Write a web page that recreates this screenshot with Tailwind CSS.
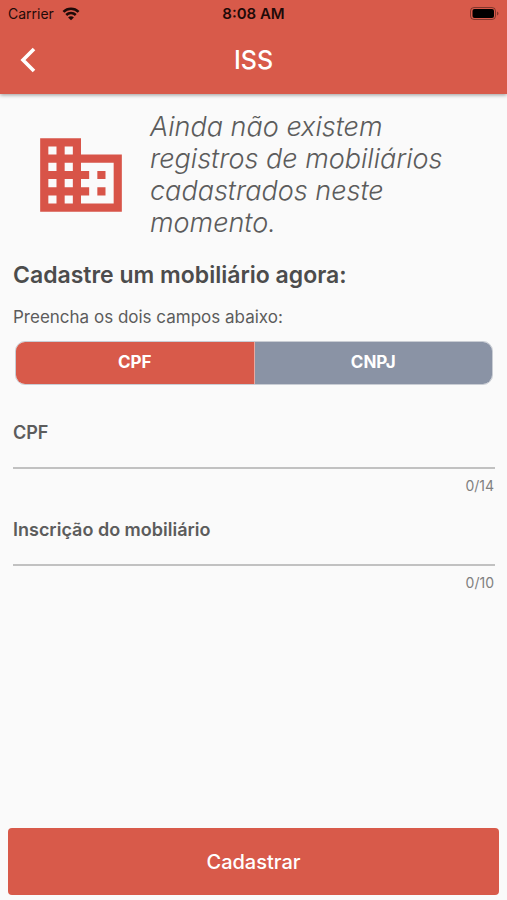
<!DOCTYPE html>
<html lang="pt-BR">
<head>
  <meta charset="UTF-8">
  <title>ISS</title>
  <meta name="viewport" content="width=device-width, initial-scale=1.0">
  <script src="https://cdn.jsdelivr.net/npm/@tailwindcss/browser@4"></script>
</head>
<body class="min-h-screen flex flex-col bg-[#fafafa] font-['Inter','Liberation_Sans',sans-serif] text-[#5c5c5c]">

  <header class="bg-[#d85a4a] shadow-[0_1px_4px_rgba(0,0,0,0.4)]">
    <!-- Status bar -->
    <div class="grid grid-cols-3 items-center h-7 px-2 text-sm leading-5 text-[#1f0a08]">
      <div class="flex items-center gap-2">
        <span>Carrier</span>
        <svg class="w-[18px] h-4" viewBox="0 0 20 17" fill="none" stroke="currentColor" stroke-width="2.8">
          <path d="M1.6 6.2a12 12 0 0 1 16.8 0"/>
          <path d="M4.7 9.6a7.6 7.6 0 0 1 10.6 0"/>
          <path d="M10 15.5l-3.2-3.2a4.5 4.5 0 0 1 6.4 0z" fill="currentColor" stroke="none"/>
        </svg>
      </div>
      <span class="text-center text-[15px] font-semibold">8:08 AM</span>
      <svg class="w-8 h-4 justify-self-end" viewBox="0 0 32 16">
        <rect x="3.5" y="1.5" width="25" height="12" rx="3.5" fill="none" stroke="#000" stroke-opacity=".4"/>
        <rect x="5.5" y="3" width="21.5" height="9" rx="2" fill="#000"/>
        <path d="M30 5.5c2 .8 2 3.2 0 4z" fill="#000" fill-opacity=".4"/>
      </svg>
    </div>

    <!-- Title bar -->
    <div class="grid grid-cols-3 items-center h-[66px] px-4 text-white">
      <button type="button" aria-label="Voltar" class="w-6 h-8">
        <svg class="w-6 h-8" viewBox="0 0 24 32" fill="none" stroke="currentColor" stroke-width="3.6">
          <path d="M18 4L7 15l11 11"/>
        </svg>
      </button>
      <h1 class="text-center text-[25px] font-medium">ISS</h1>
    </div>
  </header>

  <main class="flex-1 pl-[13px] pr-3 pt-[17px]">
    <div class="flex items-center gap-5 pl-[19px] pr-8">
      <svg class="w-[98px] h-[98px] shrink-0" viewBox="0 0 24 24" fill="#d85448">
        <path d="M12 7V3H2v18h20V7H12zM6 19H4v-2h2v2zm0-4H4v-2h2v2zm0-4H4V9h2v2zm0-4H4V5h2v2zm4 12H8v-2h2v2zm0-4H8v-2h2v2zm0-4H8V9h2v2zm0-4H8V5h2v2zm10 12h-8v-2h2v-2h-2v-2h2v-2h-2V9h8v10zm-2-8h-2v2h2v-2zm0 4h-2v2h2v-2z"/>
      </svg>
      <p class="flex-1 text-[27px] leading-8 italic font-light">Ainda não existem registros de mobiliários cadastrados neste momento.</p>
    </div>

    <form id="cadastro">
      <h2 class="mt-5 text-[23px] leading-8 font-semibold text-[#4c4c4c]">Cadastre um mobiliário agora:</h2>
      <p class="mt-[14px] text-[17px] leading-6">Preencha os dois campos abaixo:</p>

      <!-- CPF / CNPJ -->
      <div class="mt-3 mx-[2px] flex h-11 rounded-[10px] overflow-hidden border border-[#c9cdd4] text-[17px] font-bold text-white">
        <label class="flex-1 flex items-center justify-center bg-[#8a93a5] has-checked:bg-[#d85a4a] border-r border-[#e9a89f]">
          <input type="radio" name="tipo" value="cpf" checked class="sr-only">CPF
        </label>
        <label class="flex-1 flex items-center justify-center bg-[#8a93a5] has-checked:bg-[#d85a4a]">
          <input type="radio" name="tipo" value="cnpj" class="sr-only">CNPJ
        </label>
      </div>

      <div class="mt-9">
        <label for="documento" class="block text-lg leading-6 font-semibold">CPF</label>
        <input id="documento" type="text" maxlength="14" class="block w-full h-6 border-b-2 border-[#c1c1c1] outline-none">
        <p class="mt-[7px] pr-px text-right text-sm leading-5 text-[#808080]">0/14</p>
      </div>

      <div class="mt-[22px]">
        <label for="inscricao" class="block text-lg leading-6 font-semibold">Inscrição do mobiliário</label>
        <input id="inscricao" type="text" maxlength="10" class="block w-full h-6 border-b-2 border-[#c1c1c1] outline-none">
        <p class="mt-[7px] pr-px text-right text-sm leading-5 text-[#808080]">0/10</p>
      </div>
    </form>
  </main>

  <footer class="px-2 pb-[5px]">
    <button type="submit" form="cadastro" class="w-full h-[67px] rounded bg-[#d85a4a] text-xl font-medium text-white">Cadastrar</button>
  </footer>

  <script>
    // atualiza o contador de caracteres de cada campo
    document.querySelectorAll("input[type=text]").forEach(input => {
      input.addEventListener("input", () => {
        input.nextElementSibling.textContent = `${input.value.length}/${input.maxLength}`;
      });
    });
  </script>
</body>
</html>
